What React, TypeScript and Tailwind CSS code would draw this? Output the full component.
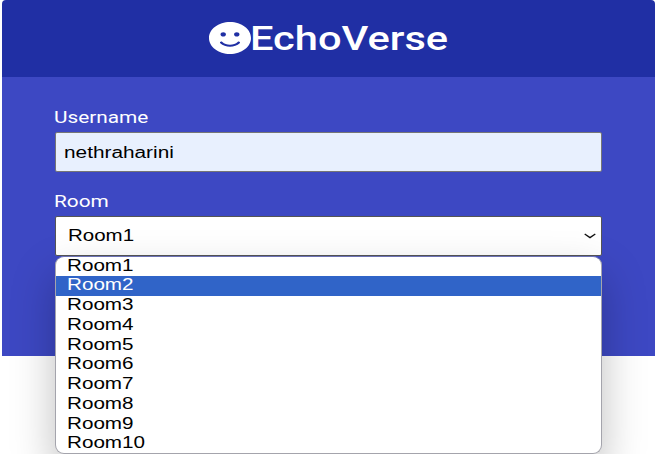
const rooms = Array.from({ length: 10 }, (_, i) => `Room${i + 1}`);

function Smile() {
  return (
    <svg className="-mt-[2px] h-8 w-[42px] shrink-0" viewBox="0 0 496 496" preserveAspectRatio="none" fill="white">
      <path
        fillRule="evenodd"
        d="M248 0C111 0 0 111 0 248s111 248 248 248 248-111 248-248S385 0 248 0zm80 160c17.700 0 32 14.300 32 32s-14.300 32-32 32-32-14.300-32-32 14.300-32 32-32zm-160 0c17.700 0 32 14.300 32 32s-14.300 32-32 32-32-14.300-32-32 14.300-32 32-32zm194.800 170.200C334.300 364.400 292.500 384 248 384s-86.300-19.600-114.800-53.800c-13.600-16.300 11-36.700 24.600-20.500 22.400 26.900 55.200 42.200 90.200 42.200s67.800-15.400 90.200-42.200c13.400-16.200 38.100 4.200 24.600 20.500z"
      />
    </svg>
  );
}

export default function App() {
  return (
    <main className="relative h-[454px] w-[655px] overflow-hidden bg-white font-['Roboto',sans-serif]">
      <section className="ml-[2px] w-[652.500px]">
        <header className="flex h-[77px] items-center rounded-t-[4px] bg-[#202fa4] pl-[207px]">
          <Smile />
          <h1 className="-ml-px origin-left scale-x-[1.26] text-[33px] leading-[40px] font-medium text-white">EchoVerse</h1>
        </header>
        <form className="h-[279px] bg-[#3d48c3] pr-[52.500px] pl-[53px] pt-[31px]">
          <label className="-ml-px block h-6 w-fit origin-left scale-x-[1.3] text-base leading-5 text-white">Username</label>
          <div className="flex h-10 items-center rounded-[2px] border border-[#767676] bg-[#e8f0fe] pl-2 font-['Liberation_Sans',sans-serif] text-base text-black">
            <span className="mt-px origin-left scale-x-[1.3]">nethraharini</span>
          </div>
          <label className="-ml-px mt-5 block h-6 w-fit origin-left scale-x-[1.3] text-base leading-5 text-white">Room</label>
          <div className="relative">
            <div className="flex h-10 items-center justify-between rounded-[2px] border border-[#555] bg-white pr-[5px] pl-3 font-['Liberation_Sans',sans-serif] text-base text-black">
              <span className="origin-left scale-x-[1.28]">Room1</span>
              <svg className="h-[6px] w-3" viewBox="0 0 12 6" fill="none" stroke="#111" strokeWidth="1.400">
                <path d="M.7 1 6 4.600 11.300 1" />
              </svg>
            </div>
            <ul className="absolute top-10 left-0 h-[198px] w-full rounded-[9px] border border-[#a4a4ac] border-t-[#6c72b5] bg-white font-['Liberation_Sans',sans-serif] text-base text-black shadow-[0_20px_44px_rgba(0,0,0,0.26)]">
              {rooms.map((room) => (
                <li
                  key={room}
                  className={`flex h-[19.750px] items-center pl-[11px] first:h-[18.500px] ${room === "Room2" ? "bg-[#3064c8] text-white shadow-[0_1px_0_#3064c8]" : ""}`}
                >
                  <span className="origin-left scale-x-[1.29]">{room}</span>
                </li>
              ))}
            </ul>
          </div>
        </form>
      </section>
    </main>
  );
}
